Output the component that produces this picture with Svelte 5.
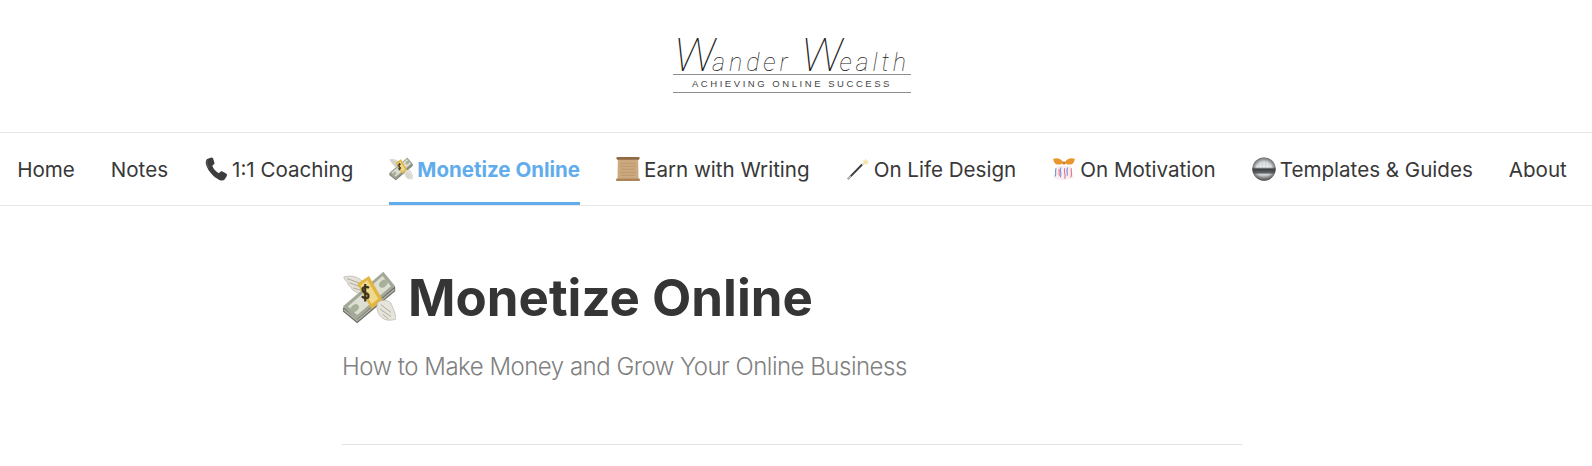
<script>
  const navItems = [
    { label: 'Home' },
    { label: 'Notes' },
    { label: '1:1 Coaching', icon: 'phone' },
    { label: 'Monetize Online', icon: 'money', active: true },
    { label: 'Earn with Writing', icon: 'scroll' },
    { label: 'On Life Design', icon: 'wand' },
    { label: 'On Motivation', icon: 'gift' },
    { label: 'Templates & Guides', icon: 'globe' },
    { label: 'About' }
  ];
</script>

{#snippet money()}
  <svg class="emoji" viewBox="0 0 64 64">
    <path d="M24 12 C18 6 10 5 2 7 C3 10 4 12 7 13 C6 16 8 18 11 19 C11 22 14 24 17 25 C19 28 22 28 25 27 L30 18 Z" fill="#e3e1d8" stroke="#b4b1a4" stroke-width="0.8" />
    <path d="M6 9 L20 14 M9 14 L22 19 M13 20 L23 23" stroke="#a5a294" stroke-width="1" fill="none" />
    <path d="M1 44 L49 3 L63 19 L63 24 L18 62 L1 48 Z" fill="#6e6f66" />
    <path d="M2 46 L18 59 L62 22" fill="none" stroke="#b9baaf" stroke-width="1.5" />
    <path d="M1 42 L49 1 L63 18 L17 58 Z" fill="#a3a998" />
    <path d="M7 42 L48 6 L58 18 L18 52 Z" fill="#dcdfd2" />
    <ellipse cx="15" cy="44" rx="5.5" ry="4" fill="#a7b098" transform="rotate(-40 15 44)" />
    <ellipse cx="49" cy="15" rx="5.5" ry="4" fill="#a7b098" transform="rotate(-40 49 15)" />
    <path d="M18 15 L32 6 L48 34 L35 45 Z" fill="#e2b63f" />
    <path d="M22 17 L30 11 L43 33 L35 39 Z" fill="#efd98f" />
    <path d="M32 20 C29 17.5 23.5 19 24.5 23 C25.5 27 31.5 25.5 31.5 29.5 C31.5 33 26 33 23.5 30 M27.5 15.5 V36" stroke="#3f3620" stroke-width="2.6" fill="none" />
    <path d="M42 38 C47 33 54 34 58 38 C60 43 63 48 64 57 C58 59 51 59 47 55 C43 52 40 44 42 38 Z" fill="#e6e4db" stroke="#b4b1a4" stroke-width="0.8" />
    <path d="M46 40 L58 49 M45 45 L58 54 M48 51 L55 57" stroke="#a5a294" stroke-width="1" fill="none" />
  </svg>
{/snippet}

{#snippet phone()}
  <svg class="emoji" viewBox="0 0 64 64">
    <path d="M8 5 L20 1 C23 1 24 3 25 6 L28 16 C28 19 26 20 22 23 C25 31 31 38 40 43 C43 39 45 37 48 38 L59 44 C62 46 62 49 60 52 L55 60 C52 63 47 63 41 61 C27 55 12 39 6 22 C4 15 4 9 8 5 Z" fill="#3d3d3d" />
    <path d="M8 8 C7 14 9 22 13 29" stroke="#6b6b6b" stroke-width="2" fill="none" />
  </svg>
{/snippet}

{#snippet scroll()}
  <svg class="emoji" viewBox="0 0 64 64">
    <path d="M5 4 H59 L60 60 H4 Z" fill="#cda97f" />
    <rect x="1" y="0" width="62" height="7" rx="3" fill="#8f6a45" />
    <rect x="0" y="57" width="64" height="7" rx="3" fill="#ad8459" />
    <path d="M13 17 H51 M11 25 H53 M13 33 H51 M11 41 H53 M13 49 H51" stroke="#b8936a" stroke-width="2" />
  </svg>
{/snippet}

{#snippet wand()}
  <svg class="emoji" viewBox="0 0 64 64">
    <path d="M5 59 L43 20" stroke="#3a3a3a" stroke-width="5" />
    <path d="M5 59 L13 51" stroke="#bdbdbd" stroke-width="5" />
    <path d="M43 20 L47 16" stroke="#dcdcdc" stroke-width="5" />
    <path d="M53 3 L55 10 L62 11 L57 15 L59 22 L53 18 L46 21 L48 14 L43 9 L50 9 Z" fill="#f3e3a8" />
  </svg>
{/snippet}

{#snippet gift()}
  <svg class="emoji" viewBox="0 0 64 64">
    <path d="M31 15 C24 3 12 1 3 5 C4 12 8 19 14 20 C20 21 26 19 31 15 Z" fill="#e8962f" />
    <path d="M33 15 C40 3 52 1 61 5 C60 12 56 19 50 20 C44 21 38 19 33 15 Z" fill="#e8962f" />
    <circle cx="32" cy="16" r="4" fill="#c97a1e" />
    <path d="M14 24 C9 34 5 46 5 58 L32 62 L59 56 C56 44 52 34 50 24 Z" fill="#fbeef0" />
    <path d="M11 30 C7 38 13 44 8 52 M24 28 C18 36 28 44 22 54 M42 28 C36 38 44 42 40 50" stroke="#6d90e0" stroke-width="3" fill="none" />
    <path d="M18 32 C22 38 16 44 20 50 M34 30 C30 40 38 46 34 58 M52 30 C48 38 56 44 50 54" stroke="#ea7284" stroke-width="3" fill="none" />
  </svg>
{/snippet}

{#snippet globe()}
  <svg class="emoji" viewBox="0 0 64 64">
    <defs>
      <linearGradient id="globe-fill" x1="0" y1="0" x2="0" y2="1">
        <stop offset="0" stop-color="#c4c8cb" />
        <stop offset="0.42" stop-color="#eceeef" />
        <stop offset="0.5" stop-color="#3a3e41" />
        <stop offset="0.66" stop-color="#5f6366" />
        <stop offset="0.74" stop-color="#d2d5d7" />
        <stop offset="1" stop-color="#74777a" />
      </linearGradient>
      <radialGradient id="globe-edge" cx="0.5" cy="0.5" r="0.5">
        <stop offset="0.6" stop-color="#555" stop-opacity="0" />
        <stop offset="1" stop-color="#444" stop-opacity="0.75" />
      </radialGradient>
    </defs>
    <circle cx="32" cy="32" r="31" fill="url(#globe-fill)" />
    <path d="M18 14 V28 M27 11 V28 M37 11 V28 M46 14 V28" stroke="#b5bbbf" stroke-width="1.5" />
    <circle cx="32" cy="32" r="31" fill="url(#globe-edge)" />
  </svg>
{/snippet}

{#snippet icon(name)}
  {#if name === 'phone'}{@render phone()}
  {:else if name === 'money'}{@render money()}
  {:else if name === 'scroll'}{@render scroll()}
  {:else if name === 'wand'}{@render wand()}
  {:else if name === 'gift'}{@render gift()}
  {:else if name === 'globe'}{@render globe()}
  {/if}
{/snippet}

<header class="masthead">
  <div class="logo">
    <div class="script"><span class="cap">W</span>ander <span class="cap">W</span>ealth</div>
    <div class="tagline">ACHIEVING ONLINE SUCCESS</div>
  </div>
</header>

<nav>
  {#each navItems as item}
    <a href="#top" class:active={item.active}>
      {#if item.icon}{@render icon(item.icon)}{/if}
      {item.label}
    </a>
  {/each}
</nav>

<main>
  <h1><span class="h1-icon">{@render money()}</span>Monetize Online</h1>
  <p>How to Make Money and Grow Your Online Business</p>
  <hr />
</main>

<style>
  :global(body) {
    background: #fff;
    overflow: hidden;
  }

  .masthead {
    height: 132px;
    padding-right: 8px;
    display: flex;
    justify-content: center;
    box-sizing: border-box;
    padding-top: 32px;
  }

  .logo {
    width: 238px;
  }

  .script {
    height: 42px;
    line-height: 46px;
    text-align: center;
    font-family: Roboto, sans-serif;
    font-style: italic;
    font-weight: 100;
    font-size: 25px;
    letter-spacing: 3.9px;
    color: #222;
    white-space: nowrap;
  }

  .cap {
    font-size: 47px;
    letter-spacing: -3px;
  }

  .tagline {
    border-top: 1px solid #8d8d8d;
    border-bottom: 1px solid #8d8d8d;
    height: 17px;
    line-height: 18px;
    text-align: center;
    font-family: "Liberation Sans", sans-serif;
    font-size: 9.5px;
    letter-spacing: 2.55px;
    color: #444;
    white-space: nowrap;
  }

  nav {
    height: 74px;
    box-sizing: border-box;
    border-top: 1px solid #e6e6e6;
    border-bottom: 1px solid #e6e6e6;
    padding-right: 8px;
    display: flex;
    justify-content: center;
    gap: 36px;
    font-family: Inter, sans-serif;
    font-size: 20.58px;
  }

  nav a {
    display: flex;
    align-items: center;
    gap: 4px;
    height: 72px;
    box-sizing: border-box;
    border-bottom: 3px solid transparent;
    padding-top: 3px;
    color: #383838;
    text-decoration: none;
    white-space: nowrap;
  }

  nav a.active {
    color: #61acec;
    font-weight: 700;
    font-size: 20.5px;
    border-bottom-color: #61acec;
  }

  .emoji {
    width: 24px;
    height: 24px;
    flex: none;
    display: block;
  }

  main {
    width: 900px;
    margin-left: 342px;
    font-family: Inter, sans-serif;
  }

  h1 {
    margin: 62px 0 0;
    display: flex;
    align-items: center;
    gap: 12px;
    font-size: 51px;
    line-height: 60px;
    font-weight: 700;
    color: #353535;
  }

  .h1-icon {
    width: 54px;
    height: 54px;
    flex: none;
  }

  .h1-icon :global(svg) {
    width: 54px;
    height: 54px;
  }

  p {
    margin: 23px 0 0;
    font-size: 24px;
    letter-spacing: -0.5px;
    line-height: 32px;
    font-weight: 300;
    color: #808080;
  }

  hr {
    margin: 61px 0 0;
    border: 0;
    border-top: 1px solid #e3e3e3;
  }
</style>
